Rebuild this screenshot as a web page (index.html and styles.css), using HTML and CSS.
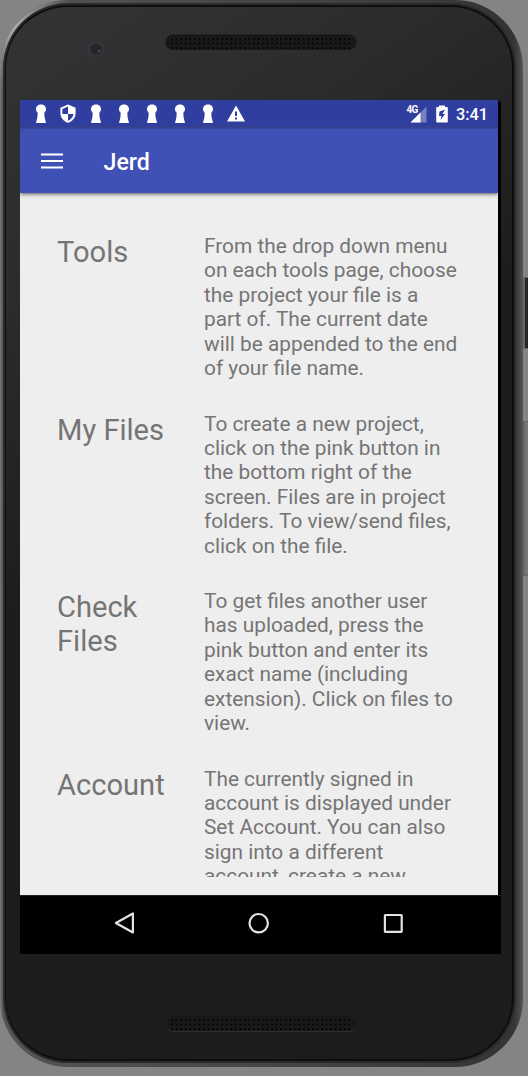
FILE: index.html
```html
<!DOCTYPE html>
<html lang="en">
<head>
<meta charset="utf-8">
<title>Jerd</title>
<link rel="stylesheet" href="styles.css">
</head>
<body>
<svg class="defs" width="0" height="0">
  <symbol id="keyhole" viewBox="0 0 12 20"><path d="M6 .5c2.900 0 5 2 5 4.600 0 1.600-.7 2.900-1.700 3.700l.3 4.500L11 19H1l1.400-5.700.3-4.500C1.700 8 1 6.700 1 5.100 1 2.500 3.100.5 6 .5z" fill="#fff"/></symbol>
</svg>
<div class="side-key power"></div>
<div class="side-key volume"></div>
<div class="phone">
  <div class="rim">
    <div class="face">
      <div class="top-bezel"><div class="camera"></div><div class="speaker"></div></div>
      <div class="display">
        <div class="screen">
          <div class="status">
            <div class="notices">
              <svg width="12" height="20"><use href="#keyhole"/></svg>
              <svg width="16" height="20" viewBox="0 0 16 20"><path d="M8 .5 15.600 3.800V9c0 4.500-3 8.300-7.600 9.800C3.400 17.300.4 13.500.4 9V3.800z" fill="#fff"/><path d="M8 2.600 2.400 5.100V10H8zM8 10h5.500c-.5 3-2.500 5.600-5.500 6.800z" fill="#303f9f"/></svg>
              <svg width="12" height="20"><use href="#keyhole"/></svg>
              <svg width="12" height="20"><use href="#keyhole"/></svg>
              <svg width="12" height="20"><use href="#keyhole"/></svg>
              <svg width="12" height="20"><use href="#keyhole"/></svg>
              <svg width="12" height="20"><use href="#keyhole"/></svg>
              <svg width="18" height="20" viewBox="0 0 18 20"><path d="M9 1.500 18 17.500H0z" fill="#fff"/><path d="M8 7.500h2v4.500H8zM8 13.600h2v2H8z" fill="#303f9f"/></svg>
            </div>
            <div class="system">
              <span class="network">4G</span>
              <svg class="signal" width="17" height="17" viewBox="0 0 17 17"><path d="M16.500.5v16H.5z" fill="#7781c1"/><path d="M10.500 6.500v10H.5z" fill="#fff"/></svg>
              <svg class="battery" width="12" height="18" viewBox="0 0 12 18"><path d="M3 .5h6V2h2q.8 0 .8.8v14q0 .7-.8.7H1q-.8 0-.8-.7v-14Q.2 2 1 2h2z" fill="#fff"/><path d="M9 4.500 3.500 6.500 3 11h2.500l-1 4 4.500-6H6.500z" fill="#303f9f"/></svg>
              <span class="clock">3:41</span>
            </div>
          </div>
          <header class="toolbar">
            <svg width="24" height="18" viewBox="0 0 24 18"><path d="M1 2.500h22M1 9h22M1 15.500h22" stroke="#fff" stroke-width="2.200"/></svg>
            <h1>Jerd</h1>
          </header>
          <main class="content">
            <section><h2>Tools</h2><p>From the drop down menu<br>on each tools page, choose<br>the project your file is a<br>part of. The current date<br>will be appended to the end<br>of your file name.</p></section>
            <section><h2>My Files</h2><p>To create a new project,<br>click on the pink button in<br>the bottom right of the<br>screen. Files are in project<br>folders. To view/send files,<br>click on the file.</p></section>
            <section><h2>Check<br>Files</h2><p>To get files another user<br>has uploaded, press the<br>pink button and enter its<br>exact name (including<br>extension). Click on files to<br>view.</p></section>
            <section><h2>Account</h2><p>The currently signed in<br>account is displayed under<br>Set Account. You can also<br>sign into a different<br>account, create a new</p></section>
          </main>
        </div>
        <nav class="navbar">
          <svg width="22" height="24" viewBox="0 0 22 24"><path d="M18.900 2.500v19L1.900 12z"/></svg>
          <svg width="22" height="24" viewBox="0 0 22 24"><circle cx="10.700" cy="12.200" r="9.200"/></svg>
          <svg width="22" height="24" viewBox="0 0 22 24"><rect x="2.900" y="4" width="16.800" height="16.800" rx=".5"/></svg>
        </nav>
      </div>
      <div class="bottom-bezel"><div class="speaker"></div></div>
    </div>
  </div>
</div>
</body>
</html>
```

FILE: styles.css
```css
* { box-sizing: border-box; }
body { margin: 0; width: 528px; height: 1076px; overflow: hidden; background: #848484; font-family: Roboto, "Liberation Sans", sans-serif; }
.defs { position: absolute; }
svg { display: block; }
.side-key { position: absolute; left: 522px; width: 6px; border: solid #696667; border-width: 1px 0 1px 3px; }
.power { top: 277px; height: 72px; background: #252526; }
.volume { top: 421px; height: 155px; background: #777; }
.phone { position: relative; width: 523px; height: 1067px; padding: 3px 7px 4px 3px; border-radius: 68px; background: linear-gradient(90deg, #777 0, #555 3px, #474546 50%, #353334 514px, #454344 519px, #5a5859 523px); }
.phone::before { content: ""; position: absolute; inset: 0; border-radius: 68px; background: radial-gradient(circle at 12px 25px, #b0b0b0 0, #888 26px, transparent 62px); }
.rim { position: relative; height: 100%; padding: 2px; border-radius: 65px; background: #2b2a2b; }
.face { height: 1056px; border: solid #0e0e0f; border-width: 2px 2px 2px 1px; border-radius: 63px; background: linear-gradient(145deg, #343436 0, #2b2b2c 22%, #1d1d1e 43%, #1c1c1d 100%); }
.top-bezel { height: 93px; display: flex; align-items: flex-start; padding: 27px 0 0 80px; }
.camera { width: 20px; height: 20px; margin-top: 5px; border-radius: 50%; background: radial-gradient(circle at 13px 12px, #6b464c 0, #29252f 2px, transparent 3px), radial-gradient(circle, #25232d 0 5px, #353536 6px 9px, #2c2c2d 10px); }
.speaker { width: 192px; height: 17px; border-radius: 9px; background: #171718; border: 1px solid #202021; border-bottom-color: #303031; padding: 2px 4px; }
.top-bezel .speaker { margin-left: 59px; }
.speaker::before { content: ""; display: block; height: 13px; background: radial-gradient(circle at 2px 2px, #020202 0 1px, #242424 1.5px, transparent 2px) 0 0 / 4.55px 4.5px; }
.display { margin-left: 14px; width: 480.500px; height: 854px; background: linear-gradient(#222 0, #000 3px); border-bottom-left-radius: 2px; }
.screen { width: 478px; height: 795px; background: #eee; overflow: hidden; }
.status { height: 28px; background: #303f9f; display: flex; justify-content: space-between; padding: 4px 10px 0 14.500px; }
.notices { display: flex; gap: 15.900px; }
.notices svg:nth-child(2) { margin: 0 -2px; }
.notices svg:last-child { margin-left: -3px; }
.system { display: flex; color: #fff; }
.network { font-size: 10px; line-height: 12px; font-weight: 700; margin-right: -8px; letter-spacing: -.5px; }
.signal { margin-top: 2px; }
.battery { margin: 1px 8px 0 9px; }
.clock { font-size: 16.300px; line-height: 21px; font-weight: 500; }
.toolbar { position: relative; height: 65px; display: flex; align-items: center; gap: 39.500px; padding: 1px 20px 0; background: #3f51b5; box-shadow: inset 0 1px #39489f, 0 1px 4px #555; color: #fff; }
h1 { margin: 1px 0 0; font-size: 23.200px; line-height: 30px; font-weight: 500; }
.content { height: 684px; padding: 41px 20px 0 37px; overflow: hidden; color: #757575; }
section { display: grid; grid-template-columns: 147px 1fr; height: 177.500px; }
h2 { margin: 1px 0 0; font-size: 29.100px; line-height: 34.200px; font-weight: 400; white-space: nowrap; }
p { margin: 0; font-size: 20.830px; line-height: 24.400px; white-space: nowrap; }
.navbar { height: 59px; display: flex; gap: 112px; padding: 15px 0 0 93.500px; border-top: 1px solid #222; }
.navbar svg { fill: none; stroke: #e3e3e3; stroke-width: 2.200; stroke-linejoin: round; }
.bottom-bezel { height: 105px; padding: 61px 0 0 159px; }
```
